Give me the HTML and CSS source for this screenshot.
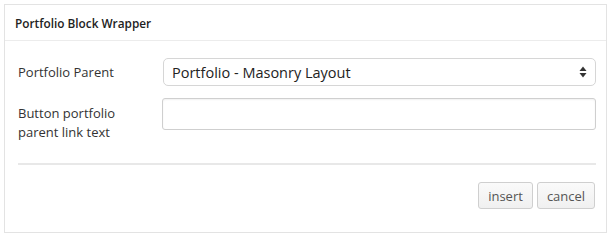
FILE: index.html
```html
<!DOCTYPE html>
<html lang="en">
<head>
  <meta charset="UTF-8" />
  <title>Portfolio Block Wrapper</title>
  <link rel="stylesheet" href="styles.css">
</head>
<body>
  <div class="panel">
    <div class="panel-header">Portfolio Block Wrapper</div>
    <div class="panel-body">
      <div class="form-row">
        <label class="form-label">Portfolio Parent</label>
        <div class="select">
          <span>Portfolio - Masonry Layout</span>
          <svg class="select-arrow" width="8" height="12" viewBox="0 0 8 12">
            <path d="M4 0.5 L7.5 5 L0.5 5 Z" fill="#333"/>
            <path d="M4 11.5 L7.5 7 L0.5 7 Z" fill="#333"/>
          </svg>
        </div>
      </div>
      <div class="form-row form-row-top">
        <label class="form-label form-label-multi">Button portfolio parent link text</label>
        <input class="text-input" type="text">
      </div>
      <hr class="divider">
      <div class="actions">
        <button class="btn">insert</button>
        <button class="btn btn-cancel">cancel</button>
      </div>
    </div>
  </div>
</body>
</html>
```

FILE: styles.css
```css
* {
  margin: 0;
  padding: 0;
  box-sizing: border-box;
}

html, body {
  background: #ffffff;
  font-family: 'Open Sans', 'Noto Sans', sans-serif;
  color: #333;
}

body {
  padding: 4px 5px 0 4px;
}

.panel {
  width: 603px;
  height: 229px;
  border: 1px solid #e3e3e3;
  background: #fff;
}

.panel-header {
  height: 36px;
  padding: 1px 0 0 10px;
  display: flex;
  align-items: center;
  font-size: 11.8px;
  font-weight: 600;
  color: #222;
  border-bottom: 1px solid #ececec;
}

.panel-body {
  padding: 17px 10px 0 13px;
}

.form-row {
  display: flex;
  align-items: center;
  margin-bottom: 12px;
}

.form-row-top {
  align-items: flex-start;
}

.form-label {
  width: 145px;
  flex-shrink: 0;
  font-size: 13px;
  color: #333;
  line-height: 19px;
}

.form-label-multi {
  width: 144px;
  padding-top: 6px;
  padding-right: 20px;
}

.select {
  flex: 1;
  height: 28px;
  border: 1px solid #d6d6d6;
  border-radius: 5px;
  display: flex;
  align-items: center;
  justify-content: space-between;
  padding: 0 8px 0 8px;
  font-size: 14.5px;
  color: #222;
}

.select-arrow {
  display: block;
}

.text-input {
  flex: 1;
  height: 32px;
  border: 1px solid #cfcfcf;
  border-radius: 3px;
  box-shadow: inset 0 1px 2px rgba(0, 0, 0, 0.06);
  outline: none;
}

.divider {
  border: none;
  height: 2px;
  background: #e8e8e8;
  margin: 21px 0 17px 0;
}

.actions {
  display: flex;
  justify-content: flex-end;
  gap: 4px;
  padding-right: 1px;
}

.btn {
  height: 27px;
  width: 55px;
  font-family: 'Open Sans', 'Noto Sans', sans-serif;
  font-size: 13px;
  color: #555;
  background: linear-gradient(#fafafa, #f0f0f0);
  border: 1px solid #cfcfcf;
  border-radius: 3px;
}

.btn-cancel {
  width: 58px;
}
```
